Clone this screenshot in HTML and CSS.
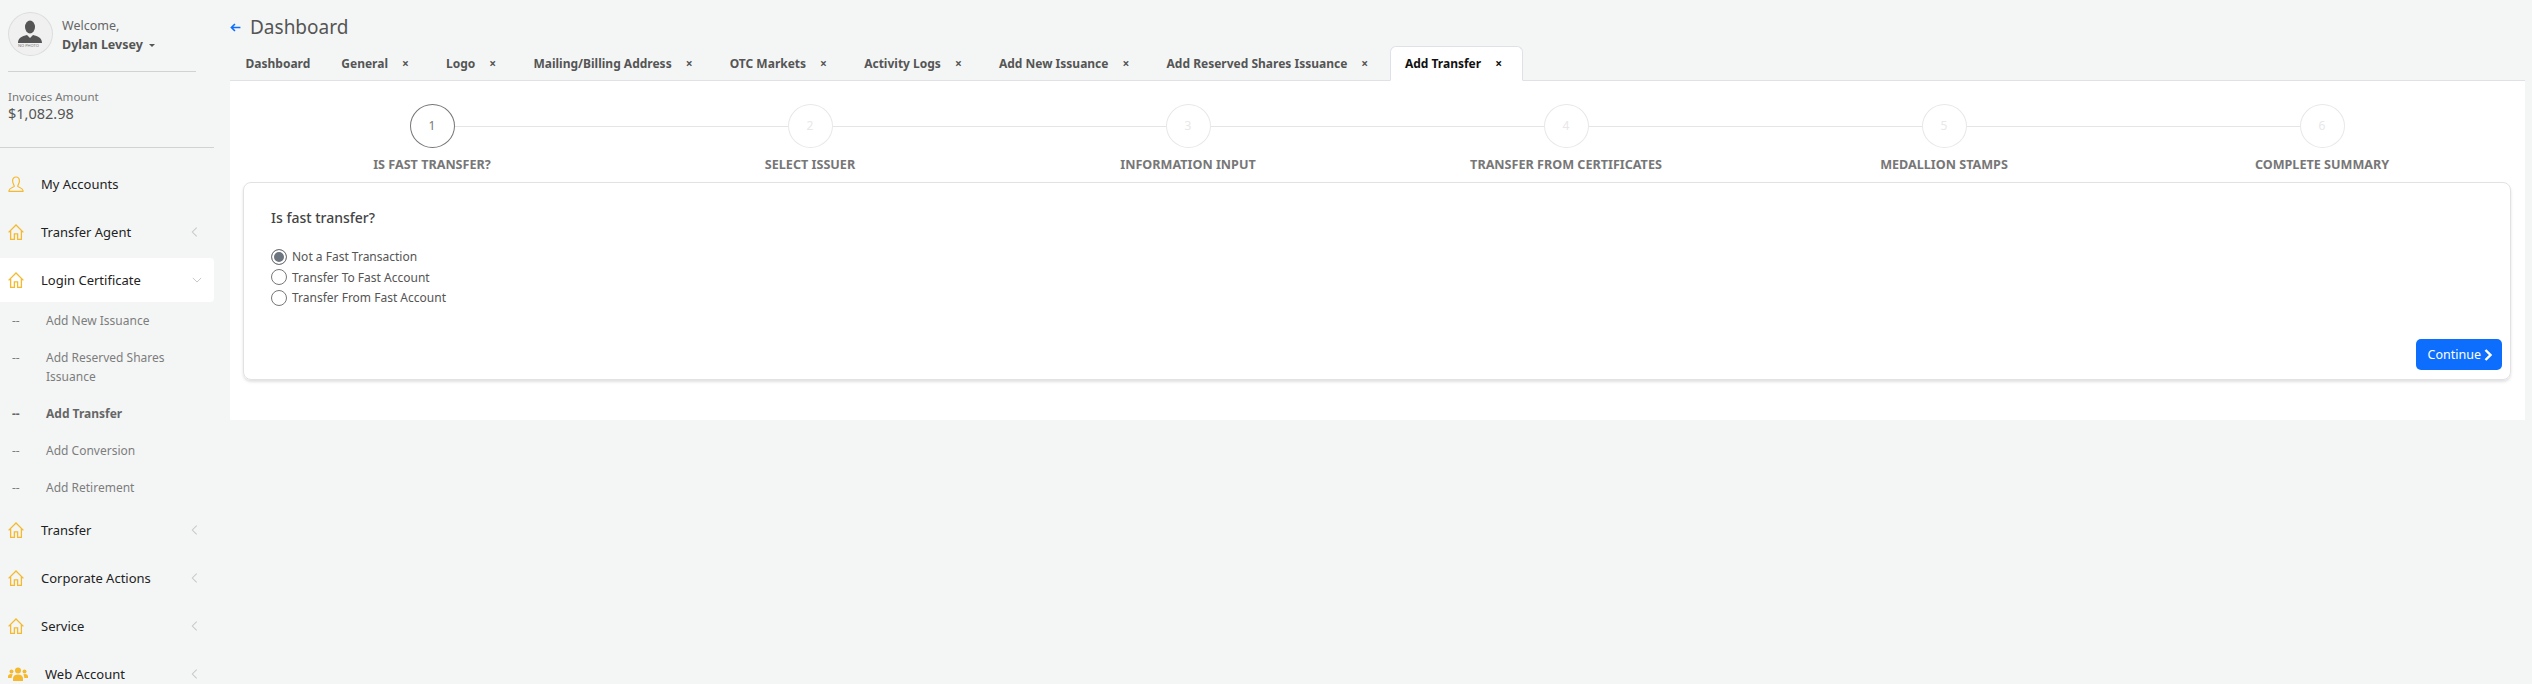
FILE: index.html
```html
<!DOCTYPE html>
<html lang="en">
<head>
    <meta charset="UTF-8">
    <meta name="viewport" content="width=device-width, initial-scale=1.0">
    <title>Add Transfer</title>
    <link rel="stylesheet" href="styles.css">
</head>
<body>
    <svg class="icon-defs" width="0" height="0">
        <symbol id="house" viewBox="0 0 16 16">
            <path d="M0.6 8.400 8 1l7.400 7.400M2.600 6.800v8.600h3.800v-5.600h3.200v5.600h3.800V6.800" fill="none" stroke="currentColor" stroke-width="1.300"/>
        </symbol>
        <symbol id="left" viewBox="0 0 8 12">
            <path d="M6.500 1 1.500 6l5 5" fill="none" stroke="currentColor" stroke-width="1.200"/>
        </symbol>
    </svg>
    <div class="layout">
        <aside class="sidebar">
            <div class="user">
                <div class="avatar">
                    <svg viewBox="0 0 44 44" width="44" height="44">
                        <ellipse cx="22" cy="15" rx="5" ry="6.500" fill="#555"/>
                        <path d="M10 31c0-5 4-7 9-8l3 3 3-3c5 1 9 3 9 8z" fill="#555"/>
                    </svg>
                    <span class="no-photo">NO PHOTO</span>
                </div>
                <div class="user-text">
                    <div class="welcome">Welcome,</div>
                    <div class="user-name">Dylan Levsey <span class="caret"></span></div>
                </div>
            </div>
            <div class="invoices">
                <div class="invoices-label">Invoices Amount</div>
                <div class="invoices-value">$1,082.98</div>
            </div>
            <nav class="menu">
                <a class="menu-item">
                    <svg class="menu-icon" viewBox="0 0 16 16"><path d="M8 1c2.200 0 3.400 1.700 3.400 4S10 9 9.700 10.200c0 1 4.800 1.400 5.300 4.300v.9H1v-.9c.5-2.900 5.300-3.300 5.300-4.300C6 9 4.600 7.300 4.600 5S5.800 1 8 1z" fill="none" stroke="currentColor" stroke-width="1.200"/></svg>
                    <span class="menu-label">My Accounts</span>
                </a>
                <a class="menu-item">
                    <svg class="menu-icon"><use href="#house"/></svg>
                    <span class="menu-label">Transfer Agent</span>
                    <svg class="menu-arrow"><use href="#left"/></svg>
                </a>
                <a class="menu-item open">
                    <svg class="menu-icon"><use href="#house"/></svg>
                    <span class="menu-label">Login Certificate</span>
                    <svg class="menu-arrow down" viewBox="0 0 12 8"><path d="M1 1.500l5 5 5-5" fill="none" stroke="currentColor" stroke-width="1.200"/></svg>
                </a>
                <ul class="submenu">
                    <li><span class="dash">--</span><span>Add New Issuance</span></li>
                    <li><span class="dash">--</span><span>Add Reserved Shares Issuance</span></li>
                    <li class="current"><span class="dash">--</span><span>Add Transfer</span></li>
                    <li><span class="dash">--</span><span>Add Conversion</span></li>
                    <li><span class="dash">--</span><span>Add Retirement</span></li>
                </ul>
                <a class="menu-item">
                    <svg class="menu-icon"><use href="#house"/></svg>
                    <span class="menu-label">Transfer</span>
                    <svg class="menu-arrow"><use href="#left"/></svg>
                </a>
                <a class="menu-item">
                    <svg class="menu-icon"><use href="#house"/></svg>
                    <span class="menu-label">Corporate Actions</span>
                    <svg class="menu-arrow"><use href="#left"/></svg>
                </a>
                <a class="menu-item">
                    <svg class="menu-icon"><use href="#house"/></svg>
                    <span class="menu-label">Service</span>
                    <svg class="menu-arrow"><use href="#left"/></svg>
                </a>
                <a class="menu-item">
                    <svg class="menu-icon users" viewBox="0 0 20 14"><g fill="currentColor"><circle cx="10" cy="3.500" r="3"/><circle cx="3.500" cy="4.500" r="2"/><circle cx="16.500" cy="4.500" r="2"/><path d="M5 14v-2.500C5 9 7 7.500 10 7.500s5 1.500 5 4V14z"/><path d="M0 11V9.500C0 8 1.200 7 3 7c.8 0 1.400.2 1.900.6C4 8.500 3.700 9.600 3.700 11zM20 11V9.500C20 8 18.800 7 17 7c-.8 0-1.400.2-1.900.6.900.9 1.200 2 1.200 3.400z"/></g></svg>
                    <span class="menu-label">Web Account</span>
                    <svg class="menu-arrow"><use href="#left"/></svg>
                </a>
            </nav>
        </aside>
        <main class="main">
            <div class="page-title">
                <svg class="back" viewBox="0 0 10 10" width="11" height="11"><path d="M9.500 5H1.500M4.500 1.800 1.300 5l3.200 3.200" fill="none" stroke="currentColor" stroke-width="1.500"/></svg>
                <h1>Dashboard</h1>
            </div>
            <div class="tabs">
                <a class="tab">Dashboard</a>
                <a class="tab">General<span class="close">×</span></a>
                <a class="tab">Logo<span class="close">×</span></a>
                <a class="tab">Mailing/Billing Address<span class="close">×</span></a>
                <a class="tab">OTC Markets<span class="close">×</span></a>
                <a class="tab">Activity Logs<span class="close">×</span></a>
                <a class="tab">Add New Issuance<span class="close">×</span></a>
                <a class="tab">Add Reserved Shares Issuance<span class="close">×</span></a>
                <a class="tab active">Add Transfer<span class="close">×</span></a>
            </div>
            <section class="panel">
                <div class="steps">
                    <div class="step active"><div class="step-circle">1</div><div class="step-label">IS FAST TRANSFER?</div></div>
                    <div class="step"><div class="step-circle">2</div><div class="step-label">SELECT ISSUER</div></div>
                    <div class="step"><div class="step-circle">3</div><div class="step-label">INFORMATION INPUT</div></div>
                    <div class="step"><div class="step-circle">4</div><div class="step-label">TRANSFER FROM CERTIFICATES</div></div>
                    <div class="step"><div class="step-circle">5</div><div class="step-label">MEDALLION STAMPS</div></div>
                    <div class="step"><div class="step-circle">6</div><div class="step-label">COMPLETE SUMMARY</div></div>
                </div>
                <div class="card">
                    <h2>Is fast transfer?</h2>
                    <form class="radios">
                        <label><input type="radio" name="fast" checked><span>Not a Fast Transaction</span></label>
                        <label><input type="radio" name="fast"><span>Transfer To Fast Account</span></label>
                        <label><input type="radio" name="fast"><span>Transfer From Fast Account</span></label>
                    </form>
                    <div class="card-footer">
                        <button class="btn-continue" type="button">Continue
                            <svg viewBox="0 0 8 12" width="8" height="12"><path d="M1.500 1l5 5-5 5" fill="none" stroke="currentColor" stroke-width="2.400"/></svg>
                        </button>
                    </div>
                </div>
            </section>
        </main>
    </div>
</body>
</html>
```
FILE: styles.css
```css
* {
    box-sizing: border-box;
}
body {
    margin: 0;
    height: 684px;
    overflow: hidden;
    background-color: #f4f6f6;
    font-family: "Noto Sans", sans-serif;
    font-size: 13px;
    color: #555;
}
.icon-defs {
    display: none;
}
.layout {
    display: flex;
    height: 684px;
}

/* sidebar */
.sidebar {
    width: 230px;
    flex-shrink: 0;
}
.user {
    display: flex;
    align-items: flex-start;
    gap: 9px;
    margin: 12px 0 0 8px;
    width: 188px;
    height: 60px;
    border-bottom: 1px solid #d2d2d2;
}
.avatar {
    position: relative;
    width: 45px;
    height: 44px;
    border: 1px solid #ddd;
    border-radius: 50%;
    background-color: #f0f0f0;
    overflow: hidden;
    flex-shrink: 0;
}
.avatar svg {
    display: block;
    margin: -1px;
}
.no-photo {
    position: absolute;
    left: 9px;
    top: 30px;
    font-size: 4px;
    line-height: 6px;
    white-space: nowrap;
    color: #777;
}
.user-text {
    padding-top: 4px;
}
.welcome {
    font-size: 12.500px;
    color: #666;
    line-height: 19px;
}
.user-name {
    font-size: 12.500px;
    font-weight: 700;
    line-height: 19px;
    color: #555;
}
.caret {
    display: inline-block;
    margin-left: 3px;
    vertical-align: 2px;
    border-left: 3px solid transparent;
    border-right: 3px solid transparent;
    border-top: 3px solid #555;
}
.invoices {
    margin-top: 16px;
    height: 60px;
    width: 214px;
    padding-left: 8px;
    border-bottom: 1px solid #d2d2d2;
}
.invoices-label {
    font-size: 11.500px;
    line-height: 17px;
    color: #777;
}
.invoices-value {
    font-size: 14.500px;
    line-height: 17px;
    color: #555;
}
.menu {
    margin-top: 12px;
    width: 214px;
}
.menu-item {
    display: flex;
    align-items: center;
    height: 48px;
    padding-left: 8px;
    color: #222;
    font-size: 13px;
}
.menu-item.open {
    height: 44px;
    margin-top: 2px;
    background-color: #fff;
    border-radius: 0 4px 4px 0;
}
.menu-icon {
    width: 16px;
    height: 16px;
    color: #f4b92f;
    flex-shrink: 0;
}
.menu-icon.users {
    width: 20px;
    height: 14px;
}
.menu-label {
    margin-left: 17px;
    flex: 1;
}
.menu-arrow {
    width: 7px;
    height: 12px;
    margin-right: 16px;
    color: #c6c8c8;
}
.menu-arrow.down {
    width: 10px;
    height: 8px;
    margin-right: 12px;
}
.submenu {
    list-style: none;
    margin: 0;
    padding: 0;
    color: #7d7d7d;
    font-size: 12px;
}
.submenu li {
    display: flex;
    padding: 9px 24px 9px 12px;
    line-height: 19px;
}
.submenu .dash {
    width: 34px;
    flex-shrink: 0;
}
.submenu .current {
    font-weight: 700;
    color: #666;
}

/* main area */
.main {
    flex: 1;
    min-width: 0;
    padding-right: 7px;
}
.page-title {
    display: flex;
    align-items: center;
    height: 48px;
    padding-top: 6px;
    gap: 9px;
}
.back {
    color: #0d6efd;
}
.page-title h1 {
    margin: 0;
    font-size: 19px;
    font-weight: 400;
    color: #555;
}
.tabs {
    display: flex;
    height: 33px;
    border-bottom: 1px solid #dee2e6;
}
.tab {
    display: block;
    height: 32px;
    padding: 6.500px 15.500px;
    font-size: 12px;
    font-weight: 700;
    line-height: 17px;
    color: #555;
    white-space: nowrap;
}
.close {
    margin: 0 6.200px 0 14px;
    color: #555;
}
.tab.active {
    height: 35px;
    margin-top: -2px;
    padding: 7.500px 14px;
    color: #111;
    background-color: #fff;
    border: 1px solid #dee2e6;
    border-bottom-color: #fff;
    border-radius: 6px 6px 0 0;
}
.tab.active .close {
    color: #111;
}
.panel {
    height: 339px;
    background-color: #fff;
    padding: 23px 14px 0 13px;
}
.steps {
    display: flex;
}
.step {
    position: relative;
    flex: 1;
    text-align: center;
}
.step:not(:last-child)::after {
    content: "";
    position: absolute;
    top: 22px;
    left: 50%;
    width: 100%;
    height: 1px;
    background-color: #e4e5e6;
}
.step-circle {
    position: relative;
    z-index: 1;
    width: 45px;
    height: 44px;
    margin: 0 auto;
    border: 1px solid #e8e8e8;
    border-radius: 50%;
    background-color: #fff;
    color: #e8e8e8;
    font-size: 12px;
    line-height: 42px;
}
.step.active .step-circle {
    border-color: #777;
    color: #777;
}
.step-label {
    margin-top: 8px;
    font-size: 12.600px;
    font-weight: 700;
    line-height: 18px;
    color: #777;
}
.card {
    position: relative;
    margin-top: 8px;
    height: 198px;
    padding: 25px 26px 0 27px;
    border: 1px solid #e2e2e2;
    border-radius: 8px;
    box-shadow: 0 2px 3px rgba(0, 0, 0, 0.12);
}
.card h2 {
    margin: 0 0 18.500px;
    font-size: 14px;
    font-weight: 500;
    line-height: 20px;
    color: #444;
}
.radios label {
    display: flex;
    align-items: center;
    height: 20.500px;
    font-size: 12px;
    color: #555;
}
.radios input {
    appearance: none;
    width: 16px;
    height: 16px;
    margin: 0 5px 0 0;
    border: 1px solid #777;
    border-radius: 50%;
    background-color: #fff;
}
.radios input:checked {
    background-color: #6c757d;
    box-shadow: inset 0 0 0 2px #fff;
}
.card-footer {
    position: absolute;
    right: 8px;
    bottom: 9px;
}
.btn-continue {
    display: flex;
    align-items: center;
    gap: 3px;
    height: 31px;
    padding: 0 10px 0 12px;
    border: 0;
    border-radius: 5px;
    background-color: #0d6efd;
    color: #fff;
    font-family: inherit;
    font-size: 12.500px;
}
```
